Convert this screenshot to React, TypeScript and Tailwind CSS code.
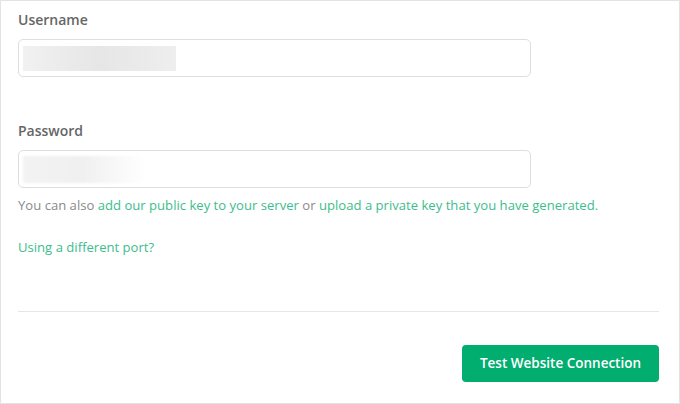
import React from "react";

export default function App() {
  return (
    <div className="w-[680px] h-[404px] bg-white border border-[#e3e3e3] pl-[17px] pr-[20px] flex flex-col" style={{ fontFamily: '"Open Sans", sans-serif' }}>
      <label className="mt-[9px] h-[20px] leading-[20px] text-[14px] font-semibold text-[#666]">Username</label>
      <div className="mt-[9px] w-[513px] h-[38px] rounded-[5px] border border-[#dedede] bg-white flex items-center px-[4px]">
        <div className="w-[153px] h-[25px] bg-gradient-to-r from-[#f1f1f1] via-[#e6e6e6] to-[#eeeeee]" />
      </div>
      <label className="mt-[44px] h-[20px] leading-[20px] text-[14px] font-semibold text-[#666]">Password</label>
      <div className="mt-[9px] w-[513px] h-[38px] rounded-[5px] border border-[#dedede] bg-white flex items-center px-[4px]">
        <div className="w-[122px] h-[27px] bg-gradient-to-r from-[#f3f3f3] via-[#f0f0f0] to-white blur-[1px]" />
      </div>
      <p className="mt-[7px] h-[20px] leading-[20px] text-[13.1px] text-[#8a8a8a] whitespace-nowrap">
        You can also <a className="text-[#3dbd8b]">add our public key to your server</a> or <a className="text-[#3dbd8b]">upload a private key that you have generated.</a>
      </p>
      <p className="mt-[22px] h-[20px] leading-[20px] text-[13.1px] text-[#3dbd8b]">Using a different port?</p>
      <div className="mt-[54px] w-[641px] h-px bg-[#e6e6e6]" />
      <div className="w-[641px] flex justify-end mt-[33px]">
        <button className="w-[197px] h-[37px] rounded-[4px] bg-[#01ad6f] text-white text-[13.5px] font-semibold">Test Website Connection</button>
      </div>
    </div>
  );
}
